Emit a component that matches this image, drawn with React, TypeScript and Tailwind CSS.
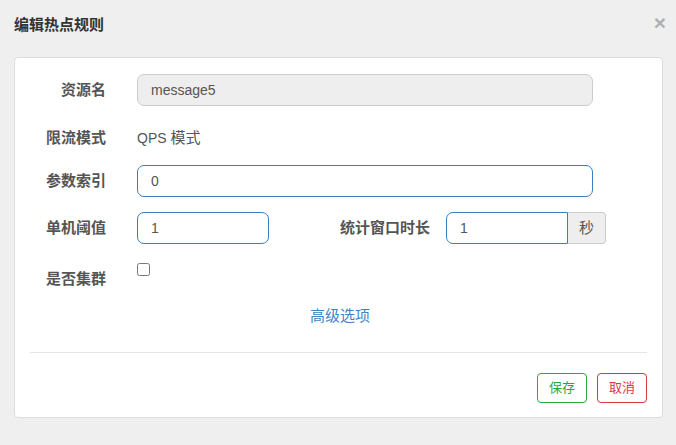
import React from "react";

const labelCls =
    "w-[91px] shrink-0 text-right text-[15px] font-bold text-[#555]";

const App = () => {
    return (
        <div
            className="w-[676px] h-[445px] bg-[#efefef] flex flex-col"
            style={{ fontFamily: '"Liberation Sans", "Noto Sans CJK SC", sans-serif' }}
        >
            {/* Header */}
            <div className="flex items-start justify-between pl-[14px] pr-[10px] pt-[16px] h-[57px]">
                <h4 className="text-[15px] font-bold text-[#333] leading-[18px]">编辑热点规则</h4>
                <button className="text-[21px] font-bold leading-[14px] text-[#b0b0b0]">×</button>
            </div>

            {/* Card */}
            <div className="ml-[14px] w-[649px] h-[361px] bg-white border border-[#dddddd] rounded-[4px] flex flex-col pt-[16px]">
                {/* 资源名 */}
                <div className="flex items-center h-[32px]">
                    <label className={labelCls}>资源名</label>
                    <div className="ml-[31px] w-[456px] h-[32px] rounded-[7px] border border-[#cccccc] bg-[#eeeeee] pl-[13px] flex items-center text-[14px] text-[#555]">
                        message5
                    </div>
                </div>

                {/* 限流模式 */}
                <div className="flex items-center h-[30px] mt-[17px]">
                    <label className={labelCls}>限流模式</label>
                    <span className="ml-[31px] text-[14px] text-[#555]">
                        QPS <span className="text-[15px]">模式</span>
                    </span>
                </div>

                {/* 参数索引 */}
                <div className="flex items-center h-[32px] mt-[12px]">
                    <label className={labelCls}>参数索引</label>
                    <div className="ml-[31px] w-[456px] h-[32px] rounded-[7px] border border-[#3a7dbf] pl-[13px] flex items-center text-[14px] text-[#555]">
                        0
                    </div>
                </div>

                {/* 单机阈值 / 统计窗口时长 */}
                <div className="flex items-center h-[32px] mt-[15px]">
                    <label className={labelCls}>单机阈值</label>
                    <div className="ml-[31px] w-[132px] h-[32px] rounded-[7px] border border-[#3a7dbf] pl-[13px] flex items-center text-[14px] text-[#555]">
                        1
                    </div>
                    <label className="w-[161px] shrink-0 text-right text-[15px] font-bold text-[#555]">
                        统计窗口时长
                    </label>
                    <div className="ml-[16px] flex h-[32px]">
                        <div className="w-[122px] h-[32px] rounded-l-[7px] border border-[#3a7dbf] pl-[13px] flex items-center text-[14px] text-[#555]">
                            1
                        </div>
                        <div className="w-[38px] h-[32px] rounded-r-[4px] border border-l-0 border-[#cccccc] bg-[#eeeeee] flex items-center justify-center text-[15px] text-[#555]">
                            秒
                        </div>
                    </div>
                </div>

                {/* 是否集群 */}
                <div className="flex items-start h-[34px] mt-[15px]">
                    <label className={`${labelCls} pt-[10px] leading-[20px]`}>是否集群</label>
                    <input
                        type="checkbox"
                        className="ml-[31px] mt-[4px] w-[13px] h-[13px]"
                    />
                </div>

                {/* 高级选项 */}
                <div className="flex justify-center mt-[13px]">
                    <a className="text-[15px] text-[#3f84c4] leading-[20px] ml-[3px]">高级选项</a>
                </div>

                <div className="mx-[15px] mt-[26px] border-t border-[#e5e5e5]" />

                <div className="flex justify-end gap-[10px] pr-[15px] mt-[20px]">
                    <button className="w-[50px] h-[30px] rounded-[4px] border border-[#28a745] text-[13px] text-[#28a745]">
                        保存
                    </button>
                    <button className="w-[50px] h-[30px] rounded-[4px] border border-[#dc3545] text-[13px] text-[#dc3545]">
                        取消
                    </button>
                </div>
            </div>
        </div>
    );
};

export default App;
